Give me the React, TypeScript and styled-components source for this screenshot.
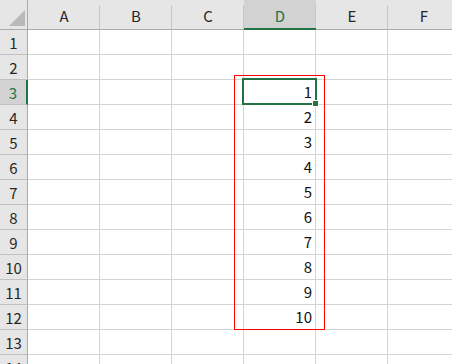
import React from "react";
import styled, { createGlobalStyle, css } from "styled-components";

const Global = createGlobalStyle`
  html, body { margin: 0; padding: 0; background: #ffffff; overflow: hidden; }
  * { box-sizing: border-box; }
`;

const GREEN = "#217346";
const GRID = "#d4d4d4";
const HEAD_BG = "#e6e6e6";
const HEAD_SEL = "#d2d2d2";
const HEAD_LINE = "#ababab";

const Viewport = styled.div`
  position: relative;
  width: 452px;
  height: 364px;
  overflow: hidden;
  font-family: "Noto Sans CJK JP", "Noto Sans", sans-serif;
`;

const Sheet = styled.div`
  display: grid;
  grid-template-columns: 28px repeat(6, 72px);
  grid-template-rows: 30px;
  grid-auto-rows: 25px;
  width: 460px;
`;

const Corner = styled.div`
  position: relative;
  background: ${HEAD_BG};
  border-right: 1px solid ${HEAD_LINE};
  border-bottom: 1px solid ${HEAD_LINE};
  display: flex;
  align-items: flex-end;
  justify-content: flex-end;
  padding: 0 2px 3px 0;
`;

const Triangle = styled.div`
  width: 0;
  height: 0;
  border-left: 16px solid transparent;
  border-bottom: 16px solid #b9b9b9;
`;

const ColHead = styled.div<{ $sel?: boolean }>`
  background: linear-gradient(#c6c6c6, #c6c6c6) right 5px / 1px calc(100% - 5px) no-repeat,
    ${(p) => (p.$sel ? HEAD_SEL : HEAD_BG)};
  border-bottom: ${(p) => (p.$sel ? `2px solid ${GREEN}` : `1px solid ${HEAD_LINE}`)};
  color: ${(p) => (p.$sel ? GREEN : "#262626")};
  display: flex;
  align-items: center;
  justify-content: center;
  padding-top: ${(p) => (p.$sel ? "3px" : "2px")};
  font-size: 15px;
  line-height: 1;
`;

const RowHead = styled.div<{ $sel?: boolean }>`
  background: ${(p) => (p.$sel ? HEAD_SEL : HEAD_BG)};
  border-bottom: 1px solid #c0c0c0;
  ${(p) =>
    p.$sel
      ? css`
          border-right: 2px solid ${GREEN};
          color: ${GREEN};
        `
      : css`
          border-right: 1px solid ${HEAD_LINE};
          color: #262626;
        `}
  display: flex;
  align-items: center;
  justify-content: center;
  font-size: 15px;
  line-height: 1;
`;

const Cell = styled.div`
  border-right: 1px solid ${GRID};
  border-bottom: 1px solid ${GRID};
  display: flex;
  align-items: center;
  justify-content: flex-end;
  padding: 0 3px 1px 0;
  font-size: 15px;
  line-height: 1;
  color: #111;
`;

const ActiveCell = styled.div`
  position: absolute;
  left: 242px;
  top: 78px;
  width: 75px;
  height: 27px;
  border: 2px solid ${GREEN};
  pointer-events: none;
`;

const FillHandle = styled.div`
  position: absolute;
  left: 312px;
  top: 100px;
  width: 7px;
  height: 7px;
  background: ${GREEN};
  border: 1px solid #ffffff;
`;

const Highlight = styled.div`
  position: absolute;
  left: 234px;
  top: 75px;
  width: 91px;
  height: 255px;
  border: 1px solid #ff0000;
  pointer-events: none;
`;

const cols = ["A", "B", "C", "D", "E", "F"];
const values: Record<number, number> = {
  3: 1, 4: 2, 5: 3, 6: 4, 7: 5, 8: 6, 9: 7, 10: 8, 11: 9, 12: 10,
};

export default function App() {
  const rows = Array.from({ length: 14 }, (_, i) => i + 1);
  return (
    <Viewport>
      <Global />
      <Sheet>
        <Corner>
          <Triangle />
        </Corner>
        {cols.map((c) => (
          <ColHead key={c} $sel={c === "D"}>
            {c}
          </ColHead>
        ))}
        {rows.map((r) => (
          <React.Fragment key={r}>
            <RowHead $sel={r === 3}>{r}</RowHead>
            {cols.map((c) => (
              <Cell key={c}>{c === "D" && values[r] !== undefined ? values[r] : ""}</Cell>
            ))}
          </React.Fragment>
        ))}
      </Sheet>
      <Highlight />
      <ActiveCell />
      <FillHandle />
    </Viewport>
  );
}
